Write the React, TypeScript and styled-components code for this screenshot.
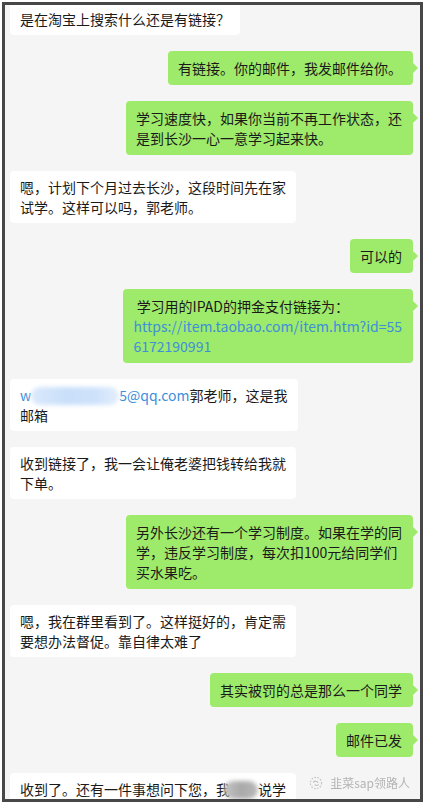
import React from 'react';
import styled, { createGlobalStyle } from 'styled-components';

const Global = createGlobalStyle`
  html, body { margin: 0; padding: 0; background: #ffffff; }
  body { font-family: "Noto Sans CJK SC", "Microsoft YaHei", sans-serif; }
`;

const Frame = styled.div`
  position: relative;
  box-sizing: border-box;
  margin: 2px 0 0 2px;
  width: 421px;
  height: 800px;
  border: 3px solid #474747;
  background: #f5f5f5;
  overflow: hidden;
`;

const List = styled.div`
  display: flex;
  flex-direction: column;
  gap: 16px;
  margin-top: -2px;
  padding: 0 7px 0 5px;
`;

const Row = styled.div<{ $mine?: boolean }>`
  display: flex;
  justify-content: ${(p) => (p.$mine ? 'flex-end' : 'flex-start')};
`;

const Bubble = styled.div<{ $mine?: boolean }>`
  position: relative;
  max-width: 300px;
  padding: ${(p) => (p.$mine ? '7px 11px 7px 10px' : '6px 10px')};
  border-radius: 4px;
  background: ${(p) => (p.$mine ? '#9eea6a' : '#ffffff')};
  color: #1a1a1a;
  font-size: 14px;
  line-height: 20px;
  white-space: pre-wrap;
  &::after {
    content: '';
    display: ${(p) => (p.$mine ? 'block' : 'none')};
    position: absolute;
    right: -5px;
    top: 12px;
    border-left: 5px solid #9eea6a;
    border-top: 5px solid transparent;
    border-bottom: 5px solid transparent;
  }
`;

const Link = styled.span`
  color: #3d8fdb;
`;

const Redaction = styled.span<{ $tone: 'blue' | 'gray'; $w: number; $overlap?: number }>`
  display: inline-block;
  vertical-align: middle;
  width: ${(p) => p.$w}px;
  height: 18px;
  margin-top: -3px;
  margin-left: ${(p) => -(p.$overlap ?? 0)}px;
  border-radius: 9px;
  background: ${(p) =>
    p.$tone === 'blue'
      ? 'linear-gradient(90deg, #dbe9fb 0%, #c9dffa 40%, #cfe2fb 75%, #e3eefc 100%)'
      : 'linear-gradient(90deg, #c4c4c4 0%, #a9a9a9 50%, #b9b9b9 100%)'};
  filter: blur(2px);
`;

const Watermark = styled.div`
  position: absolute;
  right: 10px;
  bottom: 9px;
  display: flex;
  align-items: center;
  gap: 6px;
  color: #a9a9a9;
  font-size: 12px;
  line-height: 14px;
  opacity: 0.85;
`;

const WatermarkIcon = () => (
  <svg width="15" height="14" viewBox="0 0 15 14" fill="none">
    <circle cx="7" cy="7" r="5.6" stroke="#bdbdbd" strokeWidth="1.2" strokeDasharray="1.6 1.4" />
    <path d="M4.5 6.2c1.2-1.4 3.4-1.4 4.4 0.2M6 8.8c1 0.8 2.4 0.8 3.4 0.1" stroke="#b5b5b5" strokeWidth="1.1" strokeLinecap="round" />
  </svg>
);

type Msg = { mine?: boolean; body: React.ReactNode };

const messages: Msg[] = [
  { body: '是在淘宝上搜索什么还是有链接？' },
  { mine: true, body: '有链接。你的邮件，我发邮件给你。' },
  { mine: true, body: '学习速度快，如果你当前不再工作状态，还\n是到长沙一心一意学习起来快。' },
  { body: '嗯，计划下个月过去长沙，这段时间先在家\n试学。这样可以吗，郭老师。' },
  { mine: true, body: '可以的' },
  {
    mine: true,
    body: (
      <>
        {' 学习用的IPAD的押金支付链接为：'}
        <br />
        <Link>https://item.taobao.com/item.htm?id=55</Link>
        <br />
        <Link>6172190991</Link>
      </>
    ),
  },
  {
    body: (
      <>
        <Link>w</Link>
        <Redaction $tone="blue" $w={88} />
        <Link>5@qq.com</Link>
        <span>郭老师，这是我</span>
        <br />
        <span>邮箱</span>
      </>
    ),
  },
  { body: '收到链接了，我一会让俺老婆把钱转给我就\n下单。' },
  { mine: true, body: '另外长沙还有一个学习制度。如果在学的同\n学，违反学习制度，每次扣100元给同学们\n买水果吃。' },
  { body: '嗯，我在群里看到了。这样挺好的，肯定需\n要想办法督促。靠自律太难了' },
  { mine: true, body: '其实被罚的总是那么一个同学' },
  { mine: true, body: '邮件已发' },
  {
    body: (
      <>
        {'收到了。还有一件事想问下您，我'}
        <Redaction $tone="gray" $w={34} $overlap={6} />
        {'说学'}
      </>
    ),
  },
];

export default function App() {
  return (
    <>
      <Global />
      <Frame>
        <List>
          {messages.map((m, i) => (
            <Row key={i} $mine={m.mine}>
              <Bubble $mine={m.mine}>{m.body}</Bubble>
            </Row>
          ))}
        </List>
        <Watermark>
          <WatermarkIcon />
          <span>韭菜sap领路人</span>
        </Watermark>
      </Frame>
    </>
  );
}
